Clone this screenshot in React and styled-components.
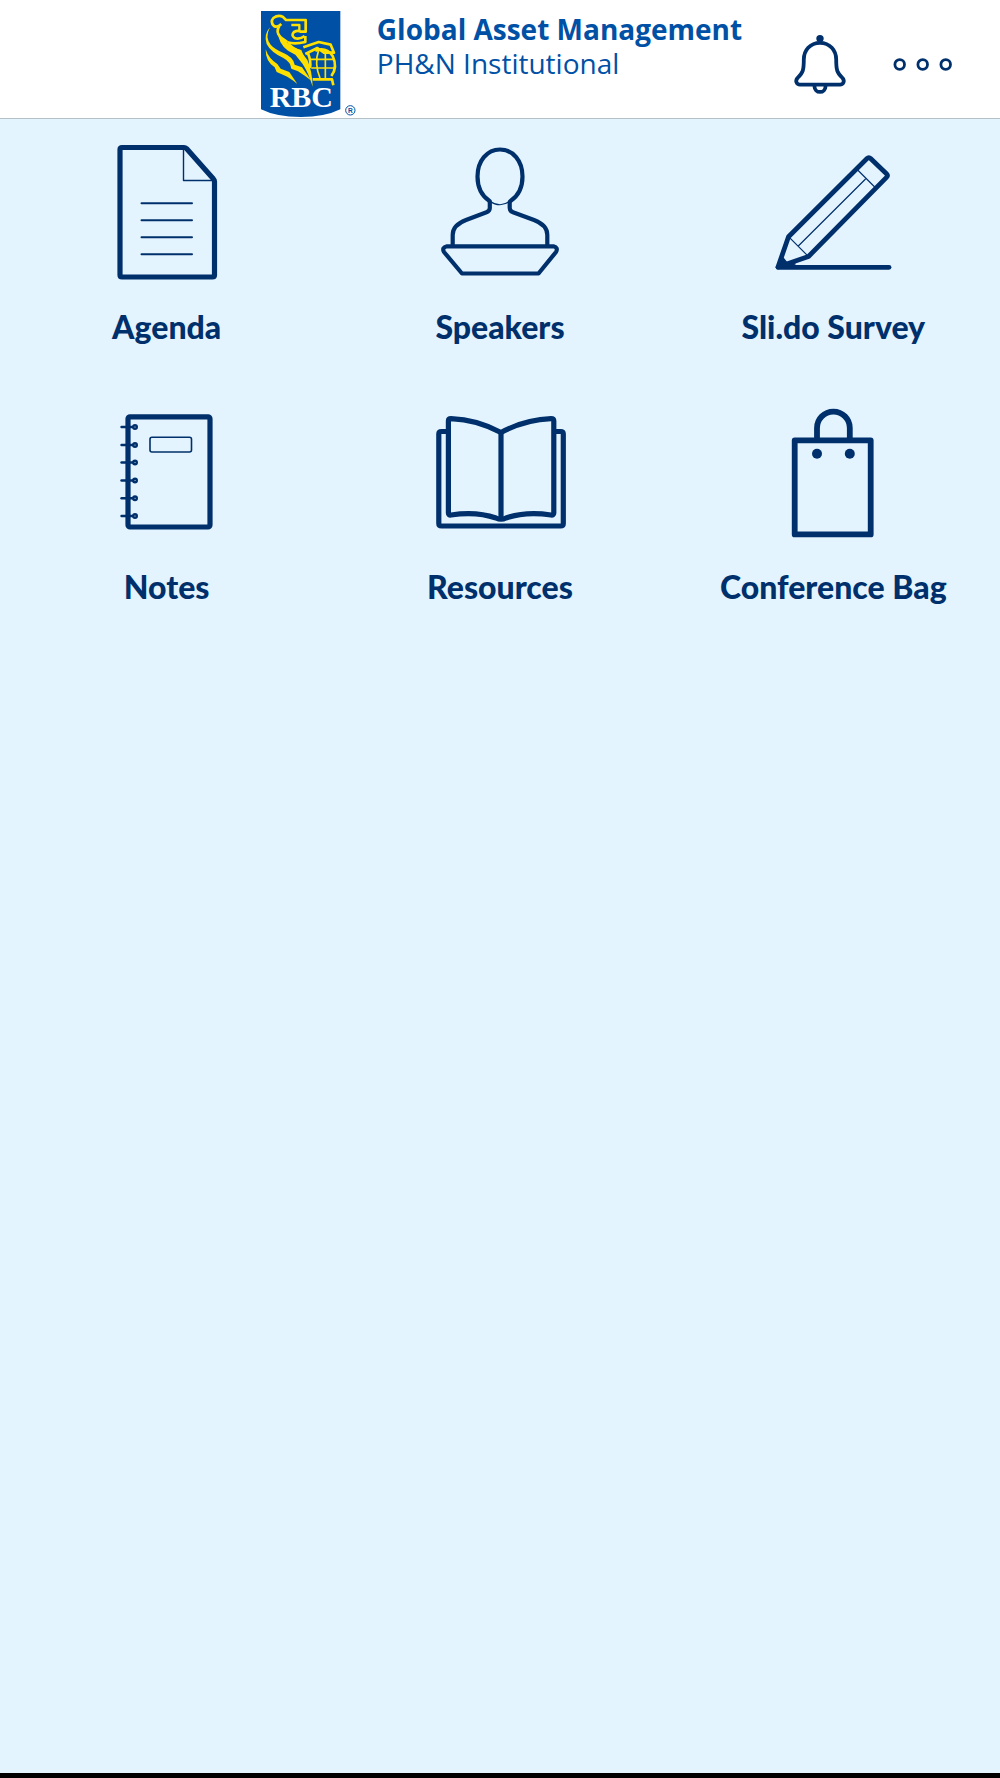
import React from 'react';
import styled, { createGlobalStyle } from 'styled-components';

const GlobalStyle = createGlobalStyle`
  body {
    margin: 0;
    background-color: #e3f4ff;
    font-family: Lato, 'Open Sans', sans-serif;
  }
`;

const Page = styled.div`
  min-height: 100vh;
  display: flex;
  flex-direction: column;
`;

const Header = styled.header`
  display: grid;
  grid-template-columns: 1fr auto 1fr;
  background-color: white;
  border-bottom: solid 1px #b4c0c6;
`;

const Brand = styled.a`
  grid-column: 2;
  display: flex;
  gap: 21px;
  padding-left: 3px;
  color: #0051a5;
  text-decoration: none;
`;

const BrandText = styled.div`
  padding-top: 12px;
  font-family: 'Open Sans', sans-serif;
  font-size: 28px;
  line-height: 34px;
  white-space: nowrap;
`;

const BrandName = styled.div`
  font-weight: ${props => (props.$bold ? 700 : 400)};
`;

const Actions = styled.div`
  display: flex;
  justify-content: flex-end;
  align-items: center;
  gap: 40px;
  padding: 10px 44px 0 0;
`;

const IconButton = styled.button`
  display: flex;
  padding: 0;
  border: none;
  background-color: transparent;
  cursor: pointer;
`;

const LineArt = styled.svg`
  display: block;
  fill: none;
  stroke: #00306b;
  stroke-width: ${props => props.$weight || 5.2};
  stroke-linecap: round;
  stroke-linejoin: round;
`;

const Menu = styled.nav`
  flex: 1;
  display: grid;
  grid-template-columns: repeat(3, 1fr);
  align-content: start;
  row-gap: 45px;
  padding-top: 13px;
`;

const MenuItem = styled.a`
  display: flex;
  flex-direction: column;
  align-items: center;
  gap: 15px;
  color: #00306b;
  text-decoration: none;
`;

const Label = styled.span`
  font-size: 32px;
  font-weight: 900;
  line-height: 40px;
  white-space: nowrap;
`;

const BottomBar = styled.footer`
  height: 5px;
  background-color: black;
`;

const Logo = () => (
  <svg width="95" height="118" viewBox="33 0 285 354" role="img" aria-label="RBC">
    <path d="M33 33 H271 V328 Q225 351 152 351 Q79 351 33 328 Z" fill="#0051a5" />
    <g fill="none" stroke="#ffe000" strokeWidth="8" strokeLinejoin="round">
      <path d="M94 72 Q82 84 72 78 Q60 66 70 54 Q84 44 98 50 L108 60 H167 V95 H152 Q144 90 132 96 Q122 106 134 114 Q148 120 164 108" />
      <path d="M124 75 H148 V90" strokeWidth="7" />
      <path d="M112 127 Q134 134 166 126 V108" />
      <path d="M88 78 Q76 96 92 112 L112 126" />
      <path d="M160 142 L206 126 L242 134 L252 158 H222 L202 144 L166 162" />
      <path d="M174 160 Q184 186 180 204 M196 152 Q228 140 248 168 Q264 202 244 228 M188 238 H246 L250 256" />
      <path d="M178 178 H252 M184 204 H256 M206 150 Q192 190 210 234 M226 150 V236" strokeWidth="5" />
    </g>
    <g fill="#ffe000">
      <path d="M60 82 Q44 112 62 134 Q72 146 102 160 Q130 172 134 194 L156 202 L184 242 Q166 228 144 214 L124 206 Q122 186 100 174 Q62 156 50 132 Q40 104 60 82 Z" />
      <path d="M47 148 Q56 176 82 192 L92 206 L118 216 L142 252 Q118 232 102 226 L80 216 L74 202 Q46 184 47 148 Z" />
      <path d="M84 96 Q100 122 126 140 L150 150 L172 180 Q186 210 188 260 Q176 220 158 192 L136 164 L114 152 Q84 130 84 96 Z" />
      <path d="M112 122 Q118 148 144 162 L164 176 L154 150 Q130 144 112 122 Z" />
    </g>
    <text
      x="154"
      y="321"
      textAnchor="middle"
      fontFamily="'Liberation Serif', serif"
      fontSize="90"
      fontWeight="700"
      fill="white"
    >
      RBC
    </text>
    <circle cx="301" cy="331" r="14" fill="none" stroke="#0051a5" strokeWidth="3" />
    <text
      x="301"
      y="338"
      textAnchor="middle"
      fontFamily="'Liberation Sans', sans-serif"
      fontSize="20"
      fontWeight="700"
      fill="#0051a5"
    >
      R
    </text>
  </svg>
);

const BellIcon = () => (
  <LineArt width="60" height="66" viewBox="0 0 60 66" $weight={3.8}>
    <circle cx="30" cy="7.6" r="1.8" />
    <path d="M30 11.8 C20 11.8 13.8 19.5 13.8 28.5 C13.8 39.5 13 41.5 7.5 47 C5 50 6.5 53.6 10 53.6 H50 C53.5 53.6 55 50 52.5 47 C47 41.5 46.2 39.5 46.2 28.5 C46.2 19.5 40 11.8 30 11.8 Z" />
    <path d="M24.5 55.4 A5.5 5.5 0 0 0 35.5 55.4" />
  </LineArt>
);

const MoreIcon = () => (
  <LineArt width="66" height="20" viewBox="0 0 66 20" $weight={2.8}>
    <circle cx="9.7" cy="10.5" r="4.8" />
    <circle cx="32.7" cy="10.5" r="4.8" />
    <circle cx="55.7" cy="10.5" r="4.8" />
  </LineArt>
);

const AgendaIcon = () => (
  <LineArt width="160" height="160" viewBox="0 0 160 160">
    <path d="M35 15.5 H97 Q98.5 15.5 99.5 16.5 L126.5 47 Q127.5 48 127.5 49.5 V143 Q127.5 145 125.5 145 H35 Q33 145 33 143 V17.5 Q33 15.5 35 15.5 Z" />
    <path d="M96.5 17 V48.5 H126" strokeWidth="1.4" />
    <path d="M54.5 71.3 H105 M54.5 88.3 H105 M54.5 105.3 H105 M54.5 122.2 H105" strokeWidth="2" />
  </LineArt>
);

const SpeakersIcon = () => (
  <LineArt width="160" height="160" viewBox="0 0 160 160" $weight={4.2}>
    <path d="M69.5 69 C62 64 57.5 55 57.5 44.5 C57.5 29 67 17.5 80 17.5 C93 17.5 102.5 29 102.5 44.5 C102.5 55 98 64 90.5 69" />
    <path d="M69.5 69 Q80 76.5 90.5 69" strokeWidth="1.2" />
    <path d="M69.8 70 V76 Q69.8 79 66.5 80.2 L46 88 Q32.7 93 32.7 103 V113" />
    <path d="M89.7 70 V76 Q89.7 79 93 80.2 L114 88 Q127.3 93 127.3 103 V113" />
    <path d="M27 114.3 H133.5 Q138.5 115.5 136 120 L118.5 141.5 H42 L24 120 Q21.5 115.5 27 114.3 Z" />
  </LineArt>
);

const SurveyIcon = () => (
  <LineArt width="160" height="160" viewBox="0 0 160 160" $weight={4.8}>
    <path d="M35.5 104.8 L114 26.5 Q115.8 24.7 117.6 26.5 L133.5 41.8 Q135.3 43.6 133.5 45.4 L55.5 124.5 L25 135 Z" />
    <path d="M104.7 38 L121.7 55 M112.3 47.3 L45.3 114 M36.3 105.3 L54.3 123.3" strokeWidth="1.2" />
    <path d="M25 135.3 H136" />
    <path d="M25 135 L30 126 L34 131 L42 132 Z" fill="#00306b" strokeWidth="1.5" />
  </LineArt>
);

const rings = [35, 53, 70.5, 88.5, 106.3, 124];

const NotesIcon = () => (
  <LineArt width="160" height="160" viewBox="0 0 160 160">
    <rect x="41" y="24.8" width="82" height="110.2" rx="2" />
    <rect x="63" y="45.3" width="41.5" height="14.7" rx="2" strokeWidth="1.6" />
    {rings.map(y => (
      <g key={y} strokeWidth="2.4">
        <path d={`M34.5 ${y} H46`} />
        <circle cx="48" cy={y} r="1.8" />
      </g>
    ))}
  </LineArt>
);

const ResourcesIcon = () => (
  <LineArt width="160" height="160" viewBox="0 0 160 160">
    <path d="M27 39.5 H21.5 Q18.8 39.5 18.8 42 V131.5 Q18.8 134 21.5 134 H140.7 Q143.3 134 143.3 131.5 V42 Q143.3 39.5 140.7 39.5 H136" />
    <path d="M81 40.5 Q57 27.5 31 26.6 Q28.4 26.6 28.4 29 V121 Q28.4 123.4 31 123 Q56 119 76 126 Q81 128.5 86 126 Q106 119 131 123 Q133.8 123.4 133.8 121 V29 Q133.8 26.6 131 26.6 Q105 27.5 81 40.5 Z" />
    <path d="M81 40.5 V126" />
  </LineArt>
);

const BagIcon = () => (
  <LineArt width="160" height="160" viewBox="0 0 160 160" $weight={5.8}>
    <rect x="41.7" y="48.4" width="76" height="94" />
    <path d="M64 46 V36 A16.4 16.4 0 0 1 96.8 36 V46" />
    <circle cx="64" cy="61.7" r="5" fill="#00306b" stroke="none" />
    <circle cx="96.8" cy="61.7" r="5" fill="#00306b" stroke="none" />
  </LineArt>
);

const items = [
  { label: 'Agenda', Icon: AgendaIcon },
  { label: 'Speakers', Icon: SpeakersIcon },
  { label: 'Sli.do Survey', Icon: SurveyIcon },
  { label: 'Notes', Icon: NotesIcon },
  { label: 'Resources', Icon: ResourcesIcon },
  { label: 'Conference Bag', Icon: BagIcon },
];

const App = () => {
  return (
    <Page>
      <GlobalStyle />
      <Header>
        <Brand href="#home">
          <Logo />
          <BrandText>
            <BrandName $bold>Global Asset Management</BrandName>
            <BrandName>PH&amp;N Institutional</BrandName>
          </BrandText>
        </Brand>
        <Actions>
          <IconButton aria-label="Notifications">
            <BellIcon />
          </IconButton>
          <IconButton aria-label="More">
            <MoreIcon />
          </IconButton>
        </Actions>
      </Header>
      <Menu>
        {items.map(({ label, Icon }) => (
          <MenuItem key={label} href="#menu">
            <Icon />
            <Label>{label}</Label>
          </MenuItem>
        ))}
      </Menu>
      <BottomBar />
    </Page>
  )
};

export default App;
